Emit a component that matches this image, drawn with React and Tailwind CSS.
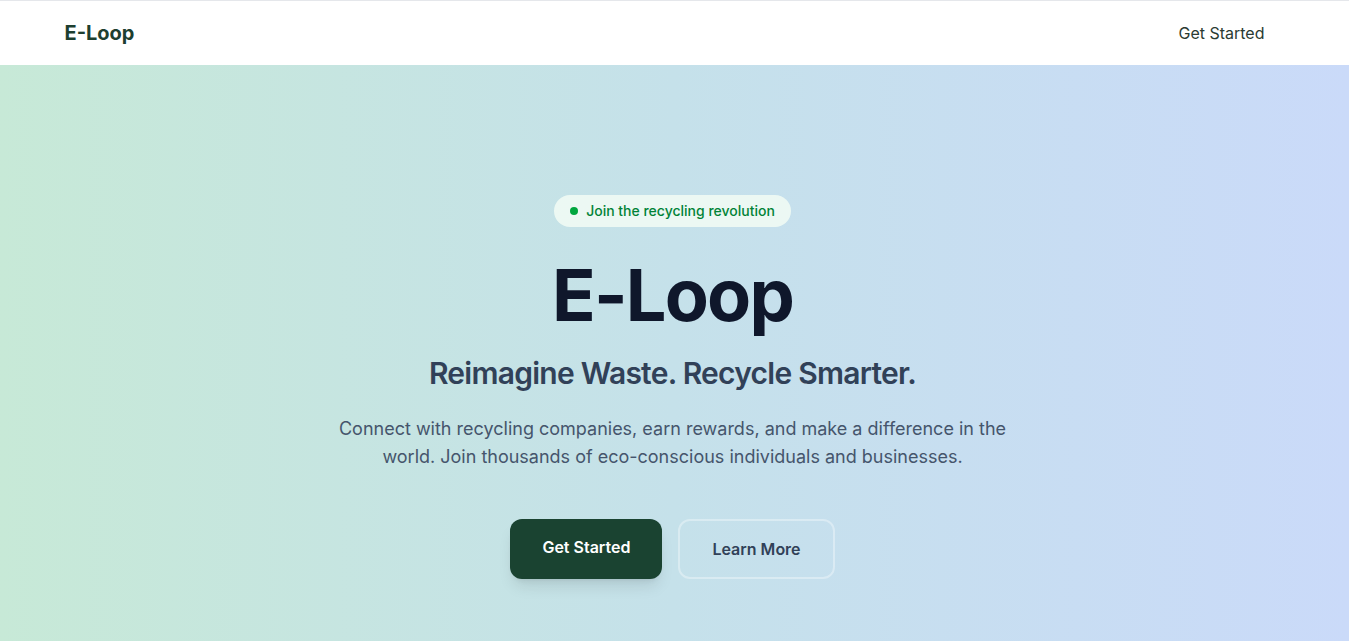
export default function App() {
  return (
    <div className="min-h-screen flex flex-col font-['Inter',sans-serif]">
      <header className="bg-white border-t border-gray-200">
        <div className="pr-1">
          <div className="max-w-7xl mx-auto px-8 h-16 flex items-center justify-between w-full">
            <span className="text-xl font-bold text-[#1d3f30]">E-Loop</span>
            <button className="px-4 py-2 text-base text-[#2a3b33]">Get Started</button>
          </div>
        </div>
      </header>

      <main className="flex-1 bg-gradient-to-r from-[#c7e9d7] via-[#c5e1ea] to-[#cadaf9] pr-1">
        <div className="max-w-4xl mx-auto px-8 pt-[130px] pb-32 flex flex-col items-center text-center">
          <div className="inline-flex items-center gap-2 rounded-full bg-[#f0fbf4]/90 px-4 py-1.5 mb-8">
            <span className="w-2 h-2 rounded-full bg-green-600" />
            <span className="text-sm font-medium text-green-700">Join the recycling revolution</span>
          </div>

          <h1 className="text-7xl font-bold leading-none tracking-tight text-slate-900 mb-6">E-Loop</h1>

          <h2 className="text-3xl font-semibold text-slate-700 mb-6 tracking-tight">
            Reimagine Waste. Recycle Smarter.
          </h2>

          <p className="text-lg leading-7 text-slate-600 max-w-2xl mb-12">
            Connect with recycling companies, earn rewards, and make a difference in the world. Join
            thousands of eco-conscious individuals and businesses.
          </p>

          <div className="flex items-center gap-4">
            <button className="px-8 pt-4 pb-5 rounded-xl bg-[#1a4331] text-white text-base font-semibold shadow-lg">
              Get Started
            </button>
            <button className="px-8 py-4 rounded-xl border-2 border-white/35 text-slate-700 text-base font-semibold">
              Learn More
            </button>
          </div>
        </div>
      </main>
    </div>
  );
}
